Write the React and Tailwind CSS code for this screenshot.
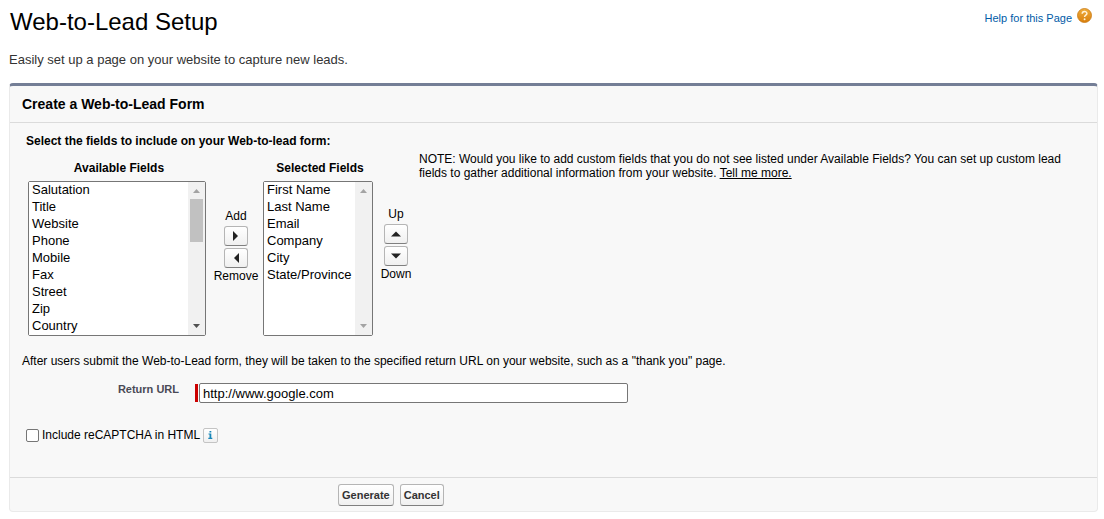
import React from 'react';

const available = ['Salutation', 'Title', 'Website', 'Phone', 'Mobile', 'Fax', 'Street', 'Zip', 'Country'];
const selected = ['First Name', 'Last Name', 'Email', 'Company', 'City', 'State/Province'];

const arrows = {
  right: 'M2 0 L7 5 L2 10 Z',
  left: 'M8 0 L3 5 L8 10 Z',
  up: 'M0 7.5 L5 2.5 L10 7.5 Z',
  down: 'M0 2.5 L5 7.5 L10 2.5 Z',
};

function ScrollArrow({ up, dark }) {
  return (
    <svg width="7" height="4" viewBox="0 0 7 4" aria-hidden="true" className={dark ? 'fill-[#505050]' : 'fill-[#a3a3a3]'}>
      <path d={up ? 'M0 4 L3.5 0 L7 4 Z' : 'M0 0 L3.5 4 L7 0 Z'} />
    </svg>
  );
}

function FieldList({ id, label, items, width, scrollable }) {
  return (
    <div className={`flex flex-col gap-[5px] ${width}`}>
      <label htmlFor={id} className="pl-1 text-center font-bold leading-4">{label}</label>
      <div className="flex rounded-[2px] border border-[#767676] bg-white">
        <select
          id={id}
          multiple
          size={9}
          className="h-[153px] min-w-0 flex-1 appearance-none overflow-hidden border-0 bg-white p-0 text-[13px] text-black outline-none"
        >
          {items.map((item) => (
            <option key={item} className="h-[17px] min-h-0 px-[3px] pt-0 pb-[2px] leading-[15px]">{item}</option>
          ))}
        </select>
        <div className="flex w-[17px] flex-col items-center justify-between bg-[#f1f1f1] pt-[7px] pb-[7px]" aria-hidden="true">
          <div className="flex flex-col items-center gap-[6px]">
            <ScrollArrow up />
            {scrollable && <div className="h-[43px] w-[13px] bg-[#c1c1c1]" />}
          </div>
          <ScrollArrow dark={scrollable} />
        </div>
      </div>
    </div>
  );
}

function ArrowButton({ direction, label }) {
  return (
    <button
      type="button"
      aria-label={label}
      className="flex h-5 w-6 items-center justify-center rounded-[3px] border border-[#b5b5b5] border-b-[#7f7f7f] bg-linear-to-b from-white to-[#f0f0f0]"
    >
      <svg width="10" height="10" viewBox="0 0 10 10" aria-hidden="true" className="fill-[#222]">
        <path d={arrows[direction]} />
      </svg>
    </button>
  );
}

function MoveControls({ top, bottom, first, second, className }) {
  return (
    <div className={`flex flex-col items-center leading-4 ${className}`}>
      <span>{top}</span>
      <div className="flex flex-col gap-[2px] pt-[2px]">
        <ArrowButton direction={first} label={top} />
        <ArrowButton direction={second} label={bottom} />
      </div>
      <span>{bottom}</span>
    </div>
  );
}

function FooterButton({ children, type }) {
  return (
    <button
      type={type}
      className="h-[22px] rounded-[3px] border border-[#b5b5b5] border-b-[#7f7f7f] bg-linear-to-b from-white to-[#f0f0f0] px-[3px] text-[11px] font-bold text-[#333]"
    >
      {children}
    </button>
  );
}

export default function App() {
  return (
    <main className="min-h-screen bg-white pt-2 pr-[6px] pb-[7px] pl-[9px] font-['Liberation_Sans',Arial,sans-serif] text-xs text-black">
      <header className="flex items-start justify-between pr-[6px] pl-px">
        <h1 className="text-2xl leading-7">Web-to-Lead Setup</h1>
        <a href="#help" className="flex items-start gap-[5px] text-[11px] leading-4 text-[#015ba7]">
          <span className="pt-[2px]">Help for this Page</span>
          <svg width="15" height="15" viewBox="0 0 15 15" aria-hidden="true">
            <defs>
              <linearGradient id="help" x1="0" y1="0" x2="0" y2="1">
                <stop offset="0" stopColor="#f0ad3c" />
                <stop offset="1" stopColor="#d97f0c" />
              </linearGradient>
            </defs>
            <circle cx="7.5" cy="7.5" r="7" fill="url(#help)" stroke="#c97a14" strokeWidth="0.8" />
            <path d="M5.2 5.7 C5.2 2.8 9.9 2.8 9.9 5.5 C9.9 7.3 7.6 7.1 7.6 9" fill="none" stroke="#fff3d8" strokeWidth="1.5" />
            <circle cx="7.6" cy="11.2" r="0.95" fill="#fff3d8" />
          </svg>
        </a>
      </header>
      <p className="mt-4 text-[13px] leading-4 text-[#333]">Easily set up a page on your website to capture new leads.</p>

      <form
        onSubmit={(event) => event.preventDefault()}
        className="mt-[15px] rounded-[4px] border border-t-[3px] border-[#eaeaea] border-t-[#747e96] bg-[#f8f8f8]"
      >
        <h2 className="border-b border-[#dbdbdb] px-3 py-2 text-sm leading-5 font-bold">Create a Web-to-Lead Form</h2>

        <div className="px-3 pt-[10px] pb-[34px]">
          <div className="flex items-start">
            <div className="shrink-0 pl-1">
              <h3 className="font-bold leading-4">Select the fields to include on your Web-to-lead form:</h3>
              <div className="flex items-start pt-[11px] pl-[2px]">
                <FieldList id="available" label="Available Fields" items={available} width="w-[178px]" scrollable />
                <MoveControls top="Add" bottom="Remove" first="right" second="left" className="w-[57px] pt-12 pl-[3px]" />
                <FieldList id="selected" label="Selected Fields" items={selected} width="w-[110px]" />
                <MoveControls top="Up" bottom="Down" first="up" second="down" className="w-[46px] pt-[46px]" />
              </div>
            </div>
            <p className="max-w-[660px] pt-[19px] leading-[14px]">
              NOTE: Would you like to add custom fields that you do not see listed under Available Fields? You can set up custom lead fields to gather additional information from your website.{' '}
              <a href="#more" className="underline">Tell me more.</a>
            </p>
          </div>

          <p className="pt-[17px] leading-4">
            After users submit the Web-to-Lead form, they will be taken to the specified return URL on your website, such as a "thank you" page.
          </p>

          <div className="flex items-start pt-3">
            <label htmlFor="return-url" className="w-[157px] text-right text-[11px] leading-4 font-bold text-[#4a4a56]">Return URL</label>
            <div className="ml-4 flex items-center gap-px pt-[2px]">
              <span className="h-[18px] w-[3px] bg-[#c00]" aria-hidden="true" />
              <input
                id="return-url"
                type="text"
                required
                defaultValue="http://www.google.com"
                className="h-5 w-[429px] rounded-[2px] border border-[#767676] bg-white px-[3px] text-[13px] text-black"
              />
            </div>
          </div>

          <div className="flex items-center gap-[3px] pt-6 pl-1">
            <input
              id="captcha"
              type="checkbox"
              className="size-[13px] appearance-none rounded-[2px] border border-[#767676] bg-white checked:bg-[#0075ff]"
            />
            <label htmlFor="captcha" className="leading-4">Include reCAPTCHA in HTML</label>
            <button type="button" aria-label="About reCAPTCHA" className="flex size-[15px] items-center justify-center rounded-[2px] border border-[#c4c4c4] bg-linear-to-b from-white to-[#f0f0f0]">
              <svg width="5" height="8" viewBox="0 0 5 8" aria-hidden="true" className="fill-[#1786b8]">
                <path d="M1.5 0h1.8v1.5H1.5zM0.5 2.5h2.8v4.3h1V8h-4V6.8h1.2V3.6h-1z" />
              </svg>
            </button>
          </div>
        </div>

        <footer className="flex gap-[6px] border-t border-[#dbdbdb] pt-[6px] pb-[5px] pl-[328px]">
          <FooterButton type="submit">Generate</FooterButton>
          <FooterButton type="button">Cancel</FooterButton>
        </footer>
      </form>
    </main>
  );
}
